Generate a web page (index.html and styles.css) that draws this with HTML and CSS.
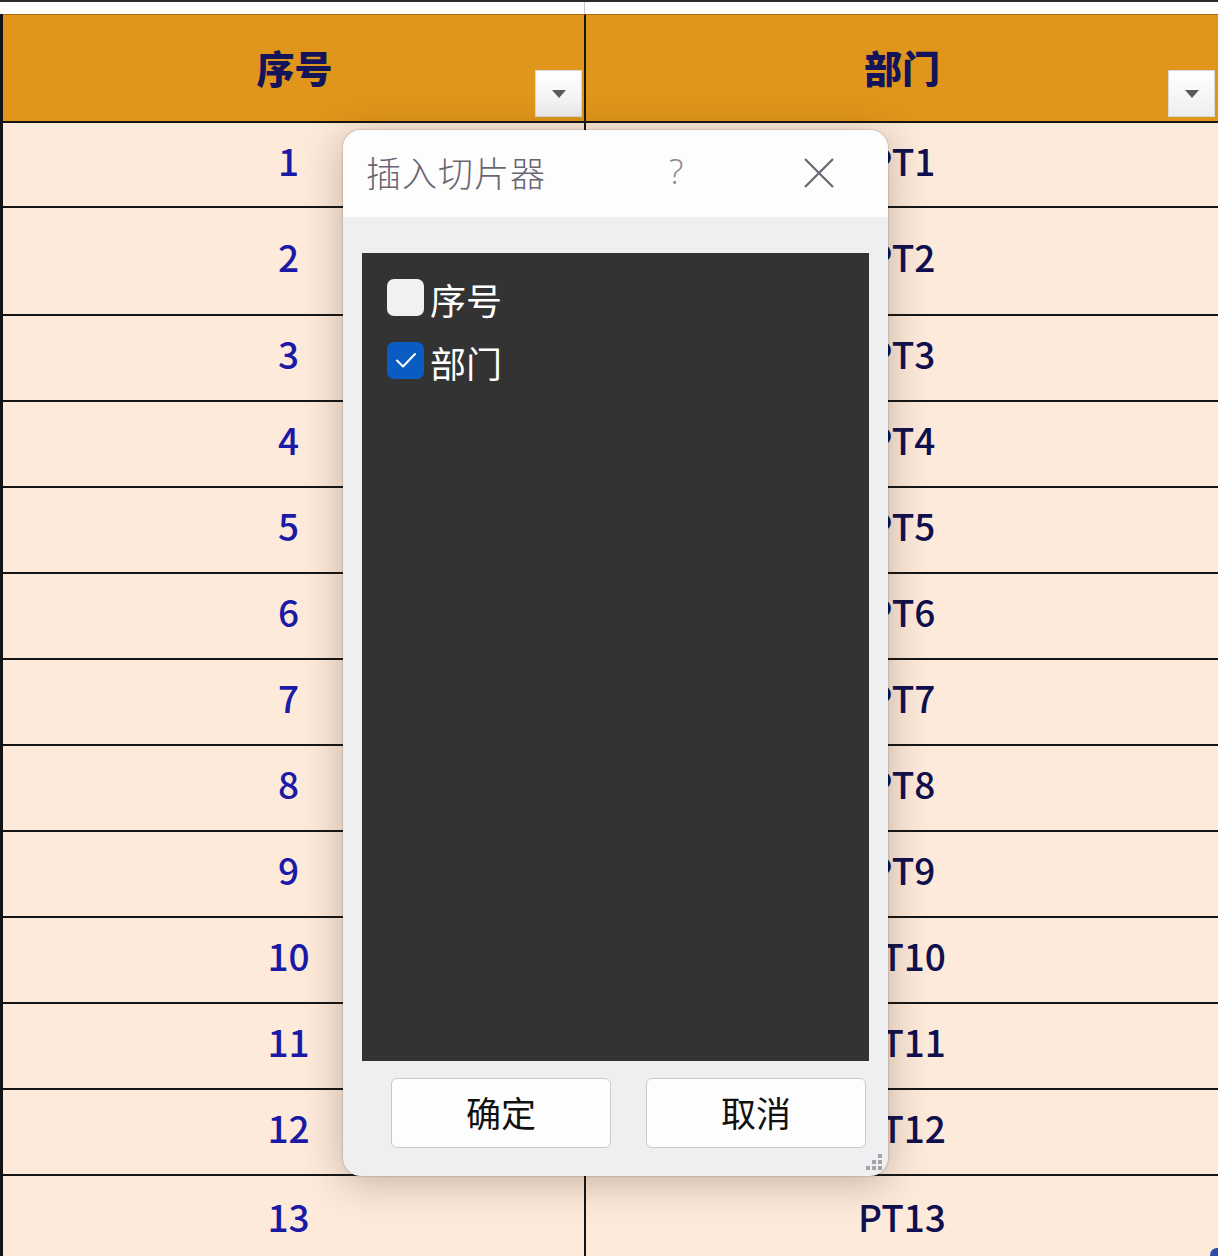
FILE: index.html
```html
<!DOCTYPE html>
<html lang="zh">
<head>
<meta charset="utf-8">
<link rel="stylesheet" href="styles.css">
</head>
<body>
<div class="page">
  <div class="topstrip"><div class="ts-left"></div><div class="ts-right"></div></div>
  <div class="sheet">
    <div class="cell head left"><span>序号</span><div class="dd"><svg width="16" height="10" viewBox="0 0 16 10"><path d="M1 1h14L8 9z" fill="#5a5a5a"/></svg></div></div>
    <div class="cell head right"><span>部门</span><div class="dd"><svg width="16" height="10" viewBox="0 0 16 10"><path d="M1 1h14L8 9z" fill="#5a5a5a"/></svg></div></div>

    <div class="cell left num r1">1</div><div class="cell right dept r1">PT1</div>
    <div class="cell left num r2">2</div><div class="cell right dept r2">PT2</div>
    <div class="cell left num">3</div><div class="cell right dept">PT3</div>
    <div class="cell left num">4</div><div class="cell right dept">PT4</div>
    <div class="cell left num">5</div><div class="cell right dept">PT5</div>
    <div class="cell left num">6</div><div class="cell right dept">PT6</div>
    <div class="cell left num">7</div><div class="cell right dept">PT7</div>
    <div class="cell left num">8</div><div class="cell right dept">PT8</div>
    <div class="cell left num">9</div><div class="cell right dept">PT9</div>
    <div class="cell left num">10</div><div class="cell right dept">PT10</div>
    <div class="cell left num">11</div><div class="cell right dept">PT11</div>
    <div class="cell left num">12</div><div class="cell right dept">PT12</div>
    <div class="cell left num last">13</div><div class="cell right dept last">PT13</div>
  </div>

  <div class="dialog">
    <div class="titlebar">
      <span class="title">插入切片器</span>
      <span class="help">?</span>
      <svg class="close" width="32" height="32" viewBox="0 0 32 32"><path d="M2 2L30 30M30 2L2 30" stroke="#6b6570" stroke-width="2.2" fill="none"/></svg>
    </div>
    <div class="dbody">
      <div class="list">
        <label class="item"><span class="box"></span><span class="lbl">序号</span></label>
        <label class="item"><span class="box checked"><svg width="24" height="20" viewBox="0 0 24 20"><path d="M3 10.5L9 16.5L21 4" stroke="#fff" stroke-width="2" fill="none" stroke-linecap="round" stroke-linejoin="round"/></svg></span><span class="lbl">部门</span></label>
      </div>
      <div class="buttons">
        <button class="btn">确定</button>
        <button class="btn">取消</button>
      </div>
    </div>
    <div class="grip">
      <i class="g g1"></i><i class="g g2"></i><i class="g g3"></i><i class="g g4"></i><i class="g g5"></i><i class="g g6"></i>
    </div>
  </div>
  <div class="corner"></div>
</div>
</body>
</html>
```
FILE: styles.css
```css
html, body {
  margin: 0;
  padding: 0;
  background: #ffffff;
  overflow: hidden;
}
.page {
  position: relative;
  width: 1218px;
  height: 1256px;
  overflow: hidden;
  font-family: "Noto Sans CJK SC", "Noto Sans", sans-serif;
}
.topstrip {
  height: 12px;
  border-top: 2px solid #2a2a2a;
  display: grid;
  grid-template-columns: 585px 1fr;
}
.ts-left {
  border-right: 1px solid #c8c8c8;
}
.sheet {
  display: grid;
  grid-template-columns: 583px 1fr;
  border-left: 3px solid #151515;
}
.cell {
  display: flex;
  align-items: center;
  justify-content: center;
  border-bottom: 2px solid #151515;
  background: #fdeadb;
  box-sizing: content-box;
}
.left {
  border-right: 2px solid #151515;
}
.head {
  position: relative;
  height: 106px;
  background: #e0961a;
  border-top: 1px solid #a86d10;
}
.head span {
  font-size: 38px;
  font-weight: 900;
  color: #14145a;
  margin-top: -4px;
}
.head.left span {
  margin-left: 2px;
}
.dd {
  position: absolute;
  right: 2px;
  bottom: 4px;
  width: 47px;
  height: 47px;
  background: linear-gradient(#ffffff, #eeeef0);
  border: 1px solid #d9d9d9;
  box-sizing: border-box;
  display: flex;
  align-items: center;
  justify-content: center;
}
.right .dd {
  right: 3px;
}
.num, .dept {
  font-size: 37px;
  font-weight: 500;
  padding-bottom: 10px;
  height: 74px;
}
.num {
  color: #1a1aa6;
}
.dept {
  color: #10104e;
}
.cell.r1 { height: 73px; }
.cell.r2 { height: 96px; }
.cell.last { height: 80px; border-bottom: none; }
.left.num {
  padding-right: 10px;
}

/* dialog */
.dialog {
  position: absolute;
  left: 343px;
  top: 130px;
  width: 545px;
  height: 1046px;
  border-radius: 18px;
  background: #eeeff1;
  box-shadow: 0 0 2px rgba(0,0,0,0.35), 0 6px 40px rgba(60,40,20,0.30);
  overflow: hidden;
  display: flex;
  flex-direction: column;
}
.titlebar {
  height: 88px;
  background: #fdfdfe;
  display: flex;
  align-items: center;
  padding: 0 0 0 23px;
  position: relative;
}
.title {
  font-size: 35px;
  font-weight: 300;
  color: #6b6570;
  letter-spacing: 1px;
  margin-top: -4px;
}
.help {
  position: absolute;
  left: 326px;
  top: 18px;
  font-family: "Open Sans", sans-serif;
  font-weight: 300;
  font-size: 34px;
  color: #8a8590;
}
.close {
  position: absolute;
  left: 460px;
  top: 27px;
}
.dbody {
  flex: 1;
  display: flex;
  flex-direction: column;
  padding: 36px 19px 28px 19px;
}
.list {
  height: 808px;
  background: #333333;
  padding: 25px 0 0 25px;
  box-sizing: border-box;
  display: flex;
  flex-direction: column;
  gap: 25px;
}
.item {
  display: flex;
  align-items: center;
  gap: 6px;
  height: 38px;
}
.box {
  width: 37px;
  height: 37px;
  border-radius: 7px;
  background: #f1f1f2;
  display: flex;
  align-items: center;
  justify-content: center;
  box-sizing: border-box;
}
.box.checked {
  background: #0b5cc2;
}
.lbl {
  font-size: 36px;
  color: #ffffff;
  margin-top: 4px;
}
.buttons {
  display: flex;
  justify-content: flex-end;
  gap: 35px;
  margin-top: 17px;
  padding-right: 3px;
}
.btn {
  width: 220px;
  height: 70px;
  background: #fdfdfd;
  border: 1px solid #c9c9cc;
  border-radius: 6px;
  font-family: "Noto Sans CJK SC", sans-serif;
  font-size: 35px;
  color: #111111;
  padding: 0 0 4px 0;
}
.grip {
  position: absolute;
  right: 3px;
  bottom: 3px;
  width: 24px;
  height: 24px;
}
.g {
  position: absolute;
  width: 4px;
  height: 4px;
  background: #a3a3a8;
}
.g1 { right: 3px; bottom: 15px; }
.g2 { right: 3px; bottom: 9px; }
.g3 { right: 9px; bottom: 9px; }
.g4 { right: 3px; bottom: 3px; }
.g5 { right: 9px; bottom: 3px; }
.g6 { right: 15px; bottom: 3px; }
.corner {
  position: absolute;
  right: -6px;
  bottom: -6px;
  width: 14px;
  height: 14px;
  border-radius: 50%;
  background: #2b4fa8;
}
```
